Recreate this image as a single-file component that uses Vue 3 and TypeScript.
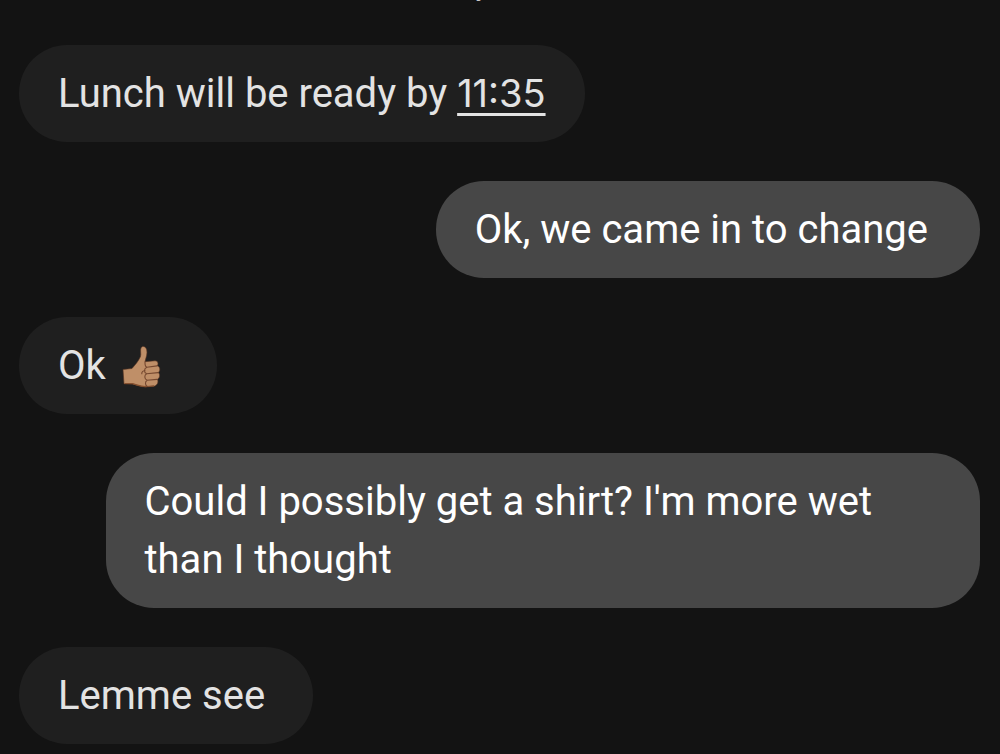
<script setup lang="ts">
interface Message {
  id: number
  side: 'received' | 'sent'
  text: string
  time?: string
  thumbsUp?: boolean
}

const messages: Message[] = [
  { id: 1, side: 'received', text: 'Lunch will be ready by ', time: '11:35' },
  { id: 2, side: 'sent', text: 'Ok, we came in to change' },
  { id: 3, side: 'received', text: 'Ok ', thumbsUp: true },
  { id: 4, side: 'sent', text: "Could I possibly get a shirt? I'm more wet than I thought" },
  { id: 5, side: 'received', text: 'Lemme see' },
]
</script>

<template>
  <main class="chat">
    <div class="divider"><span>y</span></div>
    <ol class="thread">
      <li v-for="m in messages" :key="m.id" class="bubble" :class="[m.side, { timed: m.time }]">
        <span>{{ m.text }}</span>
        <a v-if="m.time" href="#">{{ m.time }}</a>
        <svg v-if="m.thumbsUp" class="emoji" viewBox="0 0 40 44" role="img" aria-label="Thumbs up">
          <path
            d="M2 24.5 11 23.5C14 20 18 15.5 19.5 11.5 20.3 9 19 5 20 3 21 .6 24.5 1 25.6 4.5 26.8 8.5 24.8 13 24 16.7L34 15.8C37 15.8 37.8 19 36.2 20.8 39.5 21.5 39.5 26.5 37.2 27.5 39.5 29 38.8 33.5 36.3 34.3 38 37 36 41 32.8 41.2L25 42C20 42.3 15 39.5 11.5 39L3 39Z"
            fill="#bf8f68" stroke="#573421" stroke-width=".6"
          />
          <path d="M3.5 38.5 11.5 38.7C16 39.7 20 42 26 41.5L33 40.8" fill="none" stroke="#85502f" stroke-width="1.2" />
          <path
            d="M24 16.8C24 19.5 23.7 21.6 26 22.2L36 20.9M26 22.2C22.7 23.5 22.7 27.5 25.7 28.7L37 27.6M25.7 28.7C23 30 23.3 34 26 35.2L36 34.4M26 35.2C23.8 37 24 40.5 26.5 41.4M24 25.5C22 25.8 20.5 27 20.8 28.8"
            fill="none" stroke="#754830" stroke-width="1.1" stroke-linecap="round"
          />
        </svg>
      </li>
    </ol>
  </main>
</template>

<style>
html,
body {
  background: #131313;
}
</style>

<style scoped>
.chat {
  display: flex;
  flex-direction: column;
  height: 100vh;
  overflow: hidden;
  background: #131313;
  font-family: Roboto, "Liberation Sans", sans-serif;
}

.divider {
  display: flex;
  justify-content: center;
  flex: none;
  height: 45px;
  padding-right: 36px;
  overflow: hidden;
  color: #c9c9c9;
  font-size: 28px;
  line-height: 32px;
}

.divider span {
  margin-top: -30px;
}

.thread {
  display: flex;
  flex-direction: column;
  gap: 39px;
  margin: 0;
  padding: 0 20px 0 19px;
  list-style: none;
}

.bubble {
  box-sizing: border-box;
  max-width: 91%;
  padding: 20px 48px 19px 39px;
  border-radius: 48px;
  font-size: 40px;
  line-height: 58px;
  white-space: pre-wrap;
}

.received {
  align-self: flex-start;
  background: #1f1f1f;
  color: #e3e3e3;
}

.sent {
  align-self: flex-end;
  padding-right: 52px;
  background: #474747;
  color: #fff;
}

.timed {
  padding-right: 39px;
}

.bubble a {
  color: inherit;
  font-family: Inter, Roboto, sans-serif;
  font-size: 38px;
  line-height: 40px;
  text-decoration: underline;
  text-decoration-thickness: 3px;
  text-underline-offset: 6px;
}

.emoji {
  width: 40px;
  height: 44px;
  margin: 0 8px 0 5px;
  vertical-align: -10px;
}
</style>
